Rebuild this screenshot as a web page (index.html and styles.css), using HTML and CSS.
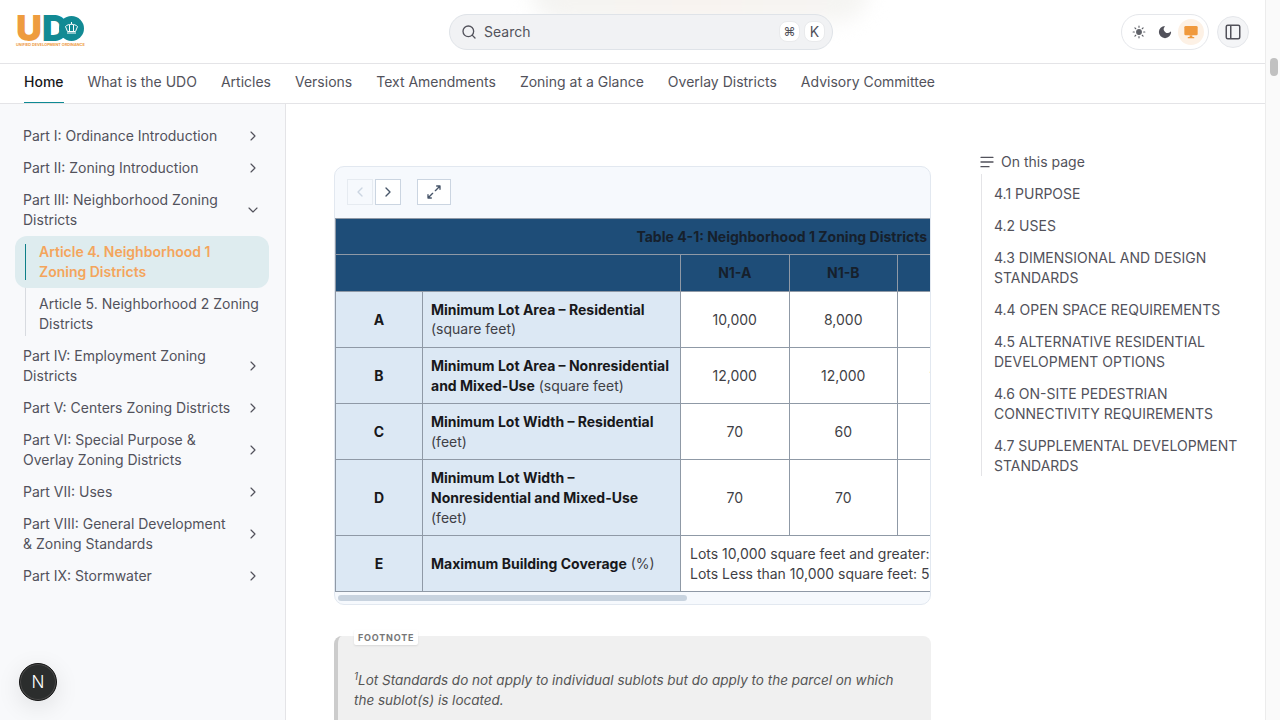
FILE: index.html
```html
<!DOCTYPE html>
<html lang="en">
<head>
  <meta charset="UTF-8" />
  <meta name="viewport" content="width=device-width, initial-scale=1.0" />
  <title>Unified Development Ordinance</title>
  <link rel="stylesheet" href="styles.css">
</head>
<body>
  <div class="page">
    <header class="site-header">
      <div class="glow"></div>
      <div class="topbar">
        <a class="logo" href="#">
          <span class="logo-mark">
            <span class="logo-u">U</span><span class="logo-d">D</span>
            <span class="logo-o">
              <svg width="15" height="12" viewBox="0 0 15 12" fill="none" stroke="#fff" stroke-width="1">
                <path d="M1.500 4.500c1.500-1.500 3.500-2.200 6-2.200s4.500.7 6 2.200l-2 5H3.500z" />
                <path d="M5.500 3v6.500M9.500 3v6.500M7.500 0v2.300" />
                <path d="M3 11h9" />
              </svg>
            </span>
          </span>
          <span class="logo-tag">UNIFIED DEVELOPMENT ORDINANCE</span>
        </a>
        <div class="search">
          <svg class="search-icon" width="16" height="16" viewBox="0 0 24 24" fill="none" stroke="#52525b" stroke-width="2" stroke-linecap="round"><circle cx="11" cy="11" r="8" /><path d="m21 21-4.300-4.300" /></svg>
          <span class="search-label">Search</span>
          <kbd class="kbd kbd-cmd">⌘</kbd>
          <kbd class="kbd">K</kbd>
        </div>
        <div class="theme-switch">
          <span class="theme-btn">
            <svg width="14" height="14" viewBox="0 0 24 24" fill="#5f6168" stroke="#5f6168" stroke-width="2" stroke-linecap="round"><circle cx="12" cy="12" r="4" /><path d="M12 2v2M12 20v2M2 12h2M20 12h2M5 5l1.400 1.400M17.600 17.600 19 19M5 19l1.400-1.400M17.600 6.400 19 5" /></svg>
          </span>
          <span class="theme-btn">
            <svg width="14" height="14" viewBox="0 0 24 24" fill="#52525b"><path d="M12 1.500a10.500 10.500 0 1 0 10.500 10.500c0-.6-.7-1-1.200-.6a6.500 6.500 0 0 1-9.600-8.800c.4-.5.100-1.100-.5-1.100z" /></svg>
          </span>
          <span class="theme-btn theme-active">
            <svg width="16" height="16" viewBox="0 0 24 24" fill="#f0993c"><rect x="2" y="3" width="20" height="14" rx="2" /><rect x="10" y="17" width="4" height="3" /><rect x="7" y="19.500" width="10" height="2" rx="1" /></svg>
          </span>
        </div>
        <button class="panel-toggle">
          <svg width="18" height="18" viewBox="0 0 24 24" fill="none" stroke="#52525b" stroke-width="2"><rect x="3" y="3" width="18" height="18" rx="2" /><path d="M9 3v18" /></svg>
        </button>
      </div>
      <nav class="tabs">
        <a class="tab tab-active" href="#">Home</a>
        <a class="tab" href="#">What is the UDO</a>
        <a class="tab" href="#">Articles</a>
        <a class="tab" href="#">Versions</a>
        <a class="tab" href="#">Text Amendments</a>
        <a class="tab" href="#">Zoning at a Glance</a>
        <a class="tab" href="#">Overlay Districts</a>
        <a class="tab" href="#">Advisory Committee</a>
      </nav>
    </header>

    <div class="layout">
      <aside class="sidebar">
        <a class="side-item" href="#"><span>Part I: Ordinance Introduction</span><svg class="chev" viewBox="0 0 24 24"><path d="m9 6 6 6-6 6" /></svg></a>
        <a class="side-item" href="#"><span>Part II: Zoning Introduction</span><svg class="chev" viewBox="0 0 24 24"><path d="m9 6 6 6-6 6" /></svg></a>
        <a class="side-item" href="#"><span>Part III: Neighborhood Zoning Districts</span><svg class="chev" viewBox="0 0 24 24"><path d="m6 9 6 6 6-6" /></svg></a>
        <div class="side-sub">
          <a class="sub-item sub-active" href="#">Article 4. Neighborhood 1 Zoning Districts</a>
          <a class="sub-item" href="#">Article 5. Neighborhood 2 Zoning Districts</a>
        </div>
        <a class="side-item" href="#"><span>Part IV: Employment Zoning Districts</span><svg class="chev" viewBox="0 0 24 24"><path d="m9 6 6 6-6 6" /></svg></a>
        <a class="side-item" href="#"><span>Part V: Centers Zoning Districts</span><svg class="chev" viewBox="0 0 24 24"><path d="m9 6 6 6-6 6" /></svg></a>
        <a class="side-item" href="#"><span>Part VI: Special Purpose &amp; Overlay Zoning Districts</span><svg class="chev" viewBox="0 0 24 24"><path d="m9 6 6 6-6 6" /></svg></a>
        <a class="side-item" href="#"><span>Part VII: Uses</span><svg class="chev" viewBox="0 0 24 24"><path d="m9 6 6 6-6 6" /></svg></a>
        <a class="side-item" href="#"><span>Part VIII: General Development &amp; Zoning Standards</span><svg class="chev" viewBox="0 0 24 24"><path d="m9 6 6 6-6 6" /></svg></a>
        <a class="side-item" href="#"><span>Part IX: Stormwater</span><svg class="chev" viewBox="0 0 24 24"><path d="m9 6 6 6-6 6" /></svg></a>
        <div class="dev-badge">N</div>
      </aside>

      <main class="content">
        <section class="table-card">
          <div class="table-tools">
            <button class="tool tool-off"><svg viewBox="0 0 24 24"><path d="m15 6-6 6 6 6" /></svg></button>
            <button class="tool"><svg viewBox="0 0 24 24"><path d="m9 6 6 6-6 6" /></svg></button>
            <button class="tool tool-wide"><svg viewBox="0 0 24 24"><path d="M14 10 21 3M16 3h5v5M10 14l-7 7M3 16v5h5" /></svg></button>
          </div>
          <div class="table-clip">
            <table class="zoning">
              <colgroup>
                <col class="col-key"><col class="col-name"><col class="col-val"><col class="col-val"><col class="col-val">
              </colgroup>
              <tr><th class="title" colspan="5">Table 4-1: Neighborhood 1 Zoning Districts</th></tr>
              <tr><th colspan="2"></th><th>N1-A</th><th>N1-B</th><th></th></tr>
              <tr>
                <td class="row-key">A</td>
                <td class="row-name"><b>Minimum Lot Area – Residential</b> (square feet)</td>
                <td>10,000</td><td>8,000</td><td></td>
              </tr>
              <tr>
                <td class="row-key">B</td>
                <td class="row-name"><b>Minimum Lot Area – Nonresidential and Mixed-Use</b> (square feet)</td>
                <td>12,000</td><td>12,000</td><td>12,000</td>
              </tr>
              <tr>
                <td class="row-key">C</td>
                <td class="row-name"><b>Minimum Lot Width – Residential</b> (feet)</td>
                <td>70</td><td>60</td><td></td>
              </tr>
              <tr>
                <td class="row-key">D</td>
                <td class="row-name"><b>Minimum Lot Width – Nonresidential and Mixed-Use</b> (feet)</td>
                <td>70</td><td>70</td><td></td>
              </tr>
              <tr>
                <td class="row-key">E</td>
                <td class="row-name"><b>Maximum Building Coverage</b> (%)</td>
                <td class="wide-cell" colspan="3">Lots 10,000 square feet and greater:<br>Lots Less than 10,000 square feet: 50%</td>
              </tr>
            </table>
          </div>
          <div class="table-scroll"><div class="table-thumb"></div></div>
        </section>

        <section class="footnote">
          <span class="footnote-tag">FOOTNOTE</span>
          <p><sup>1</sup>Lot Standards do not apply to individual sublots but do apply to the parcel on which the sublot(s) is located.</p>
        </section>
      </main>

      <aside class="toc">
        <div class="toc-head">
          <svg width="16" height="16" viewBox="0 0 24 24" fill="none" stroke="#52525b" stroke-width="2" stroke-linecap="round"><path d="M3 5h18M3 12h18M3 19h12" /></svg>
          <span>On this page</span>
        </div>
        <div class="toc-list">
          <a href="#">4.1 PURPOSE</a>
          <a href="#">4.2 USES</a>
          <a href="#">4.3 DIMENSIONAL AND DESIGN STANDARDS</a>
          <a href="#">4.4 OPEN SPACE REQUIREMENTS</a>
          <a href="#">4.5 ALTERNATIVE RESIDENTIAL DEVELOPMENT OPTIONS</a>
          <a href="#">4.6 ON-SITE PEDESTRIAN CONNECTIVITY REQUIREMENTS</a>
          <a href="#">4.7 SUPPLEMENTAL DEVELOPMENT STANDARDS</a>
        </div>
      </aside>
    </div>
  </div>

  <div class="page-scroll"><div class="page-thumb"></div></div>
</body>
</html>
```

FILE: styles.css
```css
* {
  box-sizing: border-box;
}
html, body {
  height: 100%;
}
body {
  margin: 0;
  display: flex;
  overflow: hidden;
  background-color: #fff;
  color: #52525b;
  font-family: Inter, "Liberation Sans", sans-serif;
  font-size: 14px;
  line-height: 20px;
}
a {
  color: inherit;
  text-decoration: none;
}
.page {
  flex: 1;
  min-width: 0;
  display: flex;
  flex-direction: column;
}

/* header */
.site-header {
  position: relative;
  flex: none;
  overflow: hidden;
  border-bottom: 1px solid #e4e4e7;
}
.glow {
  position: absolute;
  top: -44px;
  left: 530px;
  width: 340px;
  height: 66px;
  border-radius: 40px;
  background: linear-gradient(90deg, #f4f4f2, #f7f3ef 50%, #f5f5f3);
  filter: blur(10px);
}
.topbar {
  position: relative;
  height: 64px;
  display: flex;
  align-items: center;
  padding: 0 16px;
  border-bottom: 1px solid #e4e4e7;
}
.logo {
  width: 433px;
  display: flex;
  flex-direction: column;
}
.logo-mark {
  display: flex;
  align-items: center;
  height: 26px;
  font-size: 36px;
  font-weight: 900;
  line-height: 26px;
}
.logo-u {
  color: #ee9c3f;
}
.logo-d {
  color: #128a94;
}
.logo-o {
  width: 25px;
  height: 25px;
  margin-left: -9px;
  display: flex;
  align-items: center;
  justify-content: center;
  border-radius: 50%;
  background-color: #128a94;
}
.logo-tag {
  width: 70px;
  margin-top: 1px;
  color: #ee9c3f;
  font-size: 3.800px;
  font-weight: 700;
  line-height: 6px;
  white-space: nowrap;
}
.search {
  width: 384px;
  height: 36px;
  display: flex;
  align-items: center;
  gap: 4px;
  padding: 0 7px 0 11px;
  background-color: #f1f2f4;
  border: 1px solid #dfe3e8;
  border-radius: 18px;
}
.search-icon {
  margin-right: 3px;
}
.search-label {
  flex: 1;
}
.kbd {
  width: 21px;
  height: 21px;
  display: flex;
  align-items: center;
  justify-content: center;
  background-color: #fff;
  border: 1px solid #e9eaec;
  border-radius: 8px;
  font-family: inherit;
  font-size: 14px;
}
.kbd-cmd {
  font-size: 12px;
}
.theme-switch {
  width: 88px;
  height: 36px;
  margin-left: auto;
  display: flex;
  align-items: center;
  justify-content: center;
  border: 1px solid #e5e7eb;
  border-radius: 18px;
}
.theme-btn {
  width: 26px;
  height: 26px;
  display: flex;
  align-items: center;
  justify-content: center;
  border-radius: 50%;
}
.theme-active {
  background-color: #fdf1e5;
}
.panel-toggle {
  width: 32px;
  height: 32px;
  margin-left: 8px;
  display: flex;
  align-items: center;
  justify-content: center;
  padding: 0;
  background-color: #f4f5f7;
  border: 1px solid #e5e7eb;
  border-radius: 50%;
}
.tabs {
  position: relative;
  height: 39px;
  display: flex;
  gap: 24px;
  padding-left: 24px;
}
.tab {
  height: 39px;
  line-height: 36px;
}
.tab-active {
  color: #18181b;
  font-weight: 500;
  border-bottom: 1px solid #0e8a94;
}

/* layout */
.layout {
  flex: 1;
  min-height: 0;
  display: flex;
}
.sidebar {
  position: relative;
  flex: none;
  width: 286px;
  padding: 16px 16px 0 15px;
  background-color: #f8f9fb;
  border-right: 1px solid #e4e4e7;
}
.side-item {
  display: flex;
  align-items: center;
  justify-content: space-between;
  padding: 6px 8px;
}
.side-item span {
  max-width: 210px;
}
.chev {
  flex: none;
  width: 16px;
  height: 16px;
  fill: none;
  stroke: #52525b;
  stroke-width: 1.750;
  stroke-linecap: round;
  stroke-linejoin: round;
}
.side-sub {
  position: relative;
}
.side-sub::before {
  content: "";
  position: absolute;
  left: 10px;
  top: 4px;
  bottom: 4px;
  width: 1px;
  background-color: #d8dbe0;
}
.sub-item {
  position: relative;
  display: block;
  padding: 6px 8px 6px 24px;
}
.sub-active {
  background-color: #deecef;
  border-radius: 12px;
  color: #f4a55c;
  font-weight: 600;
}
.sub-active::before {
  content: "";
  position: absolute;
  left: 10px;
  top: 8px;
  bottom: 8px;
  width: 1px;
  background-color: #0e7f88;
}
.dev-badge {
  position: absolute;
  left: 19px;
  top: 559px;
  width: 38px;
  height: 38px;
  display: flex;
  align-items: center;
  justify-content: center;
  background-color: #2b2d2d;
  border: 1px solid #141414;
  border-radius: 50%;
  box-shadow: inset 0 0 0 1px #4a4a4a, 0 6px 24px rgba(0,0,0,0.1);
  color: #fff;
  font-size: 17px;
  font-weight: 300;
}

/* table */
.content {
  flex: none;
  width: 693px;
  padding: 62px 0 0 48px;
  overflow: hidden;
}
.table-card {
  width: 597px;
  background-color: #f6f9fd;
  border: 1px solid #e2e8f0;
  border-radius: 10px;
  overflow: hidden;
}
.table-tools {
  height: 50.700px;
  display: flex;
  align-items: flex-start;
  gap: 2px;
  padding: 12px 12px 0;
}
.tool {
  width: 26px;
  height: 26px;
  display: flex;
  align-items: center;
  justify-content: center;
  padding: 0;
  background-color: #fff;
  border: 1px solid #cbd5e1;
}
.tool svg {
  width: 16px;
  height: 16px;
  fill: none;
  stroke: #475569;
  stroke-width: 2;
  stroke-linecap: round;
  stroke-linejoin: round;
}
.tool-off {
  background-color: #f6f9fd;
  border-color: #e6ebf1;
}
.tool-off svg {
  stroke: #cbd5e1;
}
.tool-wide {
  width: 34px;
  margin-left: 14px;
}
.table-clip {
  overflow: hidden;
  background-color: #fff;
}
.zoning {
  width: 671px;
  table-layout: fixed;
  border-collapse: collapse;
  line-height: 1.4;
  color: #3f3f46;
}
.col-key {
  width: 87px;
}
.col-name {
  width: 258px;
}
.col-val {
  width: 108.500px;
}
.zoning th, .zoning td {
  padding: 8px;
  border: 1px solid #8f99a6;
  text-align: center;
}
.zoning th {
  background-color: #1e4d78;
  color: #16202c;
  font-weight: 700;
}
.zoning .title {
  padding-left: 222px;
  padding-right: 0;
  white-space: nowrap;
}
.zoning .row-key {
  background-color: #dce8f4;
  color: #18181b;
  font-weight: 700;
}
.zoning .row-name {
  background-color: #dce8f4;
  text-align: left;
}
.row-name b {
  color: #18181b;
}
.zoning .wide-cell {
  padding-left: 9px;
  text-align: left;
  white-space: nowrap;
}
.table-scroll {
  height: 11.300px;
  padding: 3px 3px 0;
}
.table-thumb {
  width: 349px;
  height: 6px;
  background-color: #c8d3df;
  border-radius: 3px;
}

/* footnote */
.footnote {
  position: relative;
  width: 597px;
  margin-top: 31px;
  padding: 26px 20px 20px 16px;
  background-color: #f0f0f0;
  border-left: 4px solid #cccccc;
  border-radius: 8px;
  color: #555;
  font-size: 13.500px;
  font-style: italic;
}
.footnote p {
  margin: 0;
  padding-top: 8px;
}
.footnote sup {
  font-size: 10px;
  line-height: 0;
}
.footnote-tag {
  position: absolute;
  left: 16px;
  top: -6px;
  padding: 0 4px;
  background-color: #fff;
  border-radius: 2px;
  box-shadow: 0 1px 2px rgba(0,0,0,0.1);
  color: #777;
  font-size: 9px;
  font-style: normal;
  font-weight: 700;
  letter-spacing: 0.8px;
  line-height: 15px;
}

/* on this page */
.toc {
  flex: 1;
  padding: 48px 21px 0 0;
}
.toc-head {
  display: flex;
  align-items: center;
  gap: 6px;
  height: 20px;
}
.toc-list {
  display: flex;
  flex-direction: column;
  gap: 12px;
  margin: 2px 0 0 2px;
  padding: 10px 0 0 12px;
  border-left: 1px solid #e4e4e7;
}

/* window scrollbar */
.page-scroll {
  flex: none;
  width: 15px;
  padding: 58px 2px 0 4px;
  background-color: #fafafa;
  border-left: 1px solid #ececec;
}
.page-thumb {
  height: 18px;
  background-color: #c1c1c1;
  border-radius: 5px;
}
```
